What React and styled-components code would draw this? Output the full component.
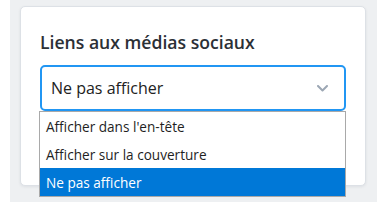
import React from 'react';
import styled, { createGlobalStyle } from 'styled-components';

const GlobalStyle = createGlobalStyle`
  html, body {
    margin: 0;
    padding: 0;
    background: #ffffff;
  }
`;

const options = [
  "Afficher dans l'en-tête",
  'Afficher sur la couverture',
  'Ne pas afficher',
];

const Chevron = () => (
  <svg width="11" height="7" viewBox="0 0 11 7">
    <path d="M1 1 L5.5 5.5 L10 1" fill="none" stroke="#9ca7b4" strokeWidth="2" strokeLinecap="round" strokeLinejoin="round" />
  </svg>
);

const App = () => {
  const selected = 2;
  return (
    <>
      <GlobalStyle />
      <Page>
        <Card>
          <Title>Liens aux médias sociaux</Title>
          <Field>
            <Select>
              <Value>{options[selected]}</Value>
              <Chevron />
            </Select>
            <ListBox>
              {options.map((o, i) => (
                <Option key={o} active={i === selected}>{o}</Option>
              ))}
            </ListBox>
          </Field>
        </Card>
      </Page>
    </>
  );
};

export default App;

const Page = styled.div`
  margin-left: 10px;
  width: 367px;
  height: 202px;
  background: #eef0f2;
  padding: 6px 11px 0 10px;
  box-sizing: border-box;
`;

const Card = styled.div`
  background: #ffffff;
  border: 1px solid #dde1e6;
  border-radius: 5px;
  box-shadow: 0 1px 3px rgba(30, 40, 60, 0.08);
  height: 180px;
  box-sizing: border-box;
  padding: 23px 19px 0 19px;
`;

const Title = styled.div`
  font-family: "Open Sans", "Noto Sans", sans-serif;
  font-weight: 600;
  font-size: 17.6px;
  line-height: 24px;
  color: #2b3036;
  margin-bottom: 11px;
`;

const Field = styled.div`
  position: relative;
`;

const Select = styled.div`
  height: 46px;
  box-sizing: border-box;
  border: 2px solid #2196f3;
  border-radius: 5px;
  display: flex;
  align-items: center;
  justify-content: space-between;
  padding: 0 16px 0 9px;
`;

const Value = styled.span`
  font-family: "Open Sans", "Noto Sans", sans-serif;
  font-size: 16px;
  color: #222222;
`;

const ListBox = styled.div`
  position: absolute;
  left: -1px;
  top: 46px;
  width: 307px;
  background: #ffffff;
  border: 1px solid #a9a9a9;
  box-sizing: border-box;
  display: flex;
  flex-direction: column;
`;

const Option = styled.div`
  height: 28px;
  display: flex;
  align-items: center;
  padding-left: 6px;
  font-family: "Open Sans", "Noto Sans", sans-serif;
  font-size: 13.6px;
  color: ${p => (p.active ? '#ffffff' : '#1f1f1f')};
  background: ${p => (p.active ? '#0078d7' : 'transparent')};
`;
